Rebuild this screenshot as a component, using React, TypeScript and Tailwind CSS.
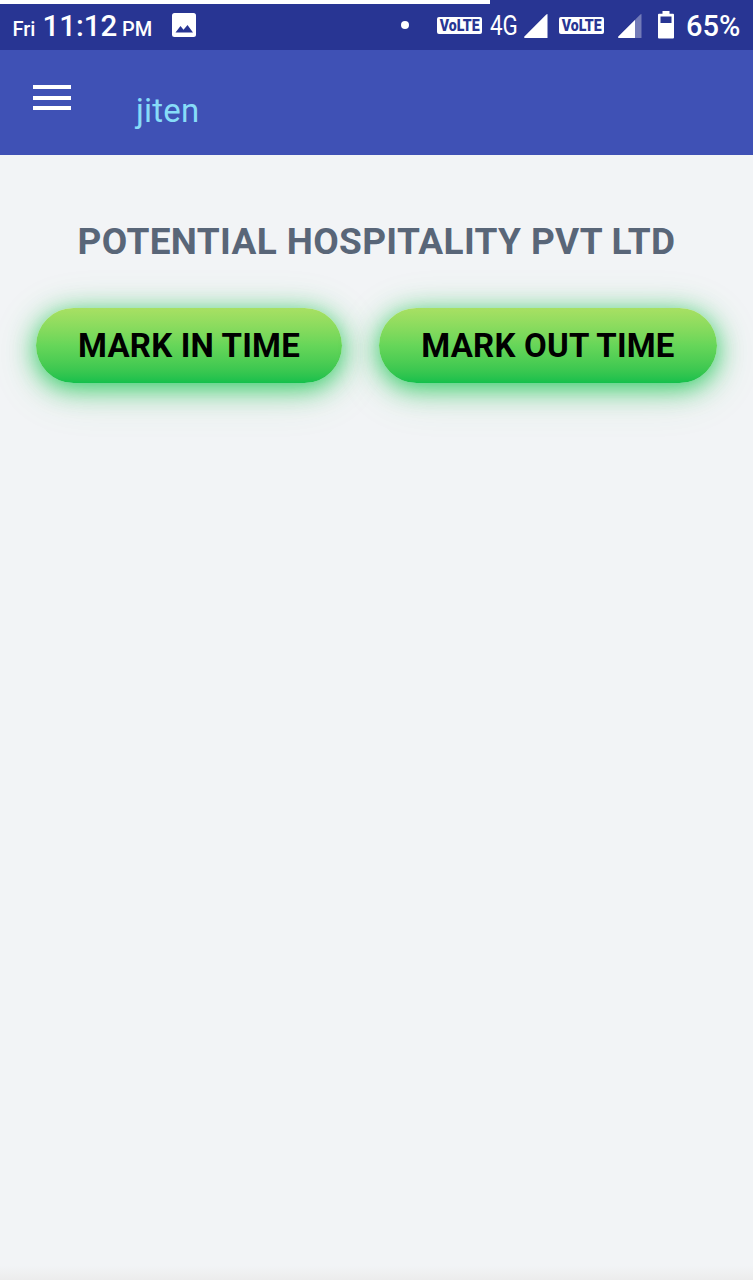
import React from 'react';

interface MarkButtonProps {
    label: string;
    className?: string;
}

const PictureIcon = () => (
    <svg width="24" height="24" viewBox="0 0 24 24" className="block">
        <rect width="24" height="24" rx="2.5" fill="#fff" />
        <path d="M3.500 19.500 8.500 13l3 3.700L15.500 12l5.500 7.500z" fill="#283593" />
    </svg>
);

const VolteBadge = () => (
    <span className="flex h-[17px] w-[45px] items-center justify-center rounded-[2px] bg-white text-[16px] leading-[17px] font-black text-[#283593]">
        <span className="scale-x-[0.88]">VoLTE</span>
    </span>
);

const SignalFullIcon = () => (
    <svg width="24" height="24" viewBox="0 0 24 24" className="block">
        <path d="M23.5 0v24H1a.8.8 0 0 1-.6-1.4L22.3.5Q23 0 23.5 0z" fill="#fff" />
    </svg>
);

const SignalWeakIcon = () => (
    <svg width="24" height="24" viewBox="0 0 24 24" className="block">
        <path d="M23.5 0v24H1a.8.8 0 0 1-.6-1.4L22.3.5Q23 0 23.5 0z" fill="#fff" fillOpacity=".35" />
        <path d="M17 6v18H1a.8.8 0 0 1-.6-1.4z" fill="#fff" />
    </svg>
);

const BatteryIcon = () => (
    <svg width="16" height="28" viewBox="0 0 16 28" className="block">
        <path
            fillRule="evenodd"
            d="M4.5 0h7v2.7H15a1 1 0 0 1 1 1V26.500a1 1 0 0 1-1 1H1a1 1 0 0 1-1-1V3.700a1 1 0 0 1 1-1h3.500zM2.500 5.500V12h11V5.500z"
            fill="#fff"
        />
    </svg>
);

const StatusBar = () => (
    <div className="h-[50px] bg-[#283593] text-white">
        <div className="h-1 w-[490px] bg-white"></div>
        <div className="flex h-[42px] items-center">
            <div className="mt-[2px] ml-[12.500px] flex w-[159.500px] items-baseline font-medium whitespace-nowrap">
                <span className="w-[30px] text-[20px]">Fri</span>
                <span className="w-[79.500px] text-[29.500px] leading-[44px]">11:12</span>
                <span className="text-[20px]">PM</span>
            </div>
            <PictureIcon />
            <div className="ml-[205px] h-[8px] w-[8px] rounded-full bg-white"></div>
            <div className="ml-[28px]"><VolteBadge /></div>
            <span className="mt-px ml-[8px] w-[34px] origin-left scale-x-[0.83] text-[27px] leading-[42px]">4G</span>
            <div className="mt-px"><SignalFullIcon /></div>
            <div className="ml-[11px]"><VolteBadge /></div>
            <div className="mt-px ml-[14px]"><SignalWeakIcon /></div>
            <div className="ml-[16px]"><BatteryIcon /></div>
            <span className="mt-[2px] ml-[12px] text-[29px] leading-[42px] font-medium">65%</span>
        </div>
    </div>
);

const AppBar = () => (
    <header className="flex h-[105px] items-start bg-[#3f51b5]">
        <button className="mt-[35px] ml-[33px] flex w-[38px] flex-col gap-[6.500px]" aria-label="Open menu">
            <span className="h-[4px] w-full bg-white"></span>
            <span className="h-[4px] w-full bg-white"></span>
            <span className="h-[4px] w-full bg-white"></span>
        </button>
        <span className="mt-[41px] ml-[65px] text-[33px] leading-[40px] tracking-[0.2px] text-[#87dcf8]">jiten</span>
    </header>
);

const MarkButton: React.FC<MarkButtonProps> = ({ label, className = '' }) => (
    <button
        className={`h-[75px] rounded-full bg-linear-to-b from-[#a8e063] via-[#66d659] to-[#12c04c] text-[33px] font-bold tracking-[0.2px] whitespace-nowrap text-black shadow-[0_5px_26px_rgba(20,200,80,0.85),0_8px_48px_rgba(60,180,80,0.2)] ${className}`}
    >
        {label}
    </button>
);

const App = () => (
    <div className="flex h-[1280px] w-full flex-col overflow-hidden bg-[#f2f4f6] font-['Roboto',sans-serif]">
        <StatusBar />
        <AppBar />
        <main className="grow">
            <h1 className="mt-[63px] text-center text-[37px] leading-[48px] font-bold tracking-[0.35px] whitespace-nowrap text-[#596678]">
                POTENTIAL HOSPITALITY PVT LTD
            </h1>
            <div className="mt-[42px] flex gap-[37px] pl-[36px]">
                <MarkButton label="MARK IN TIME" className="w-[306px]" />
                <MarkButton label="MARK OUT TIME" className="w-[338px]" />
            </div>
        </main>
        <div className="h-[14px] bg-linear-to-b from-[#f2f4f6] to-[#ececec]"></div>
    </div>
);

export default App;
